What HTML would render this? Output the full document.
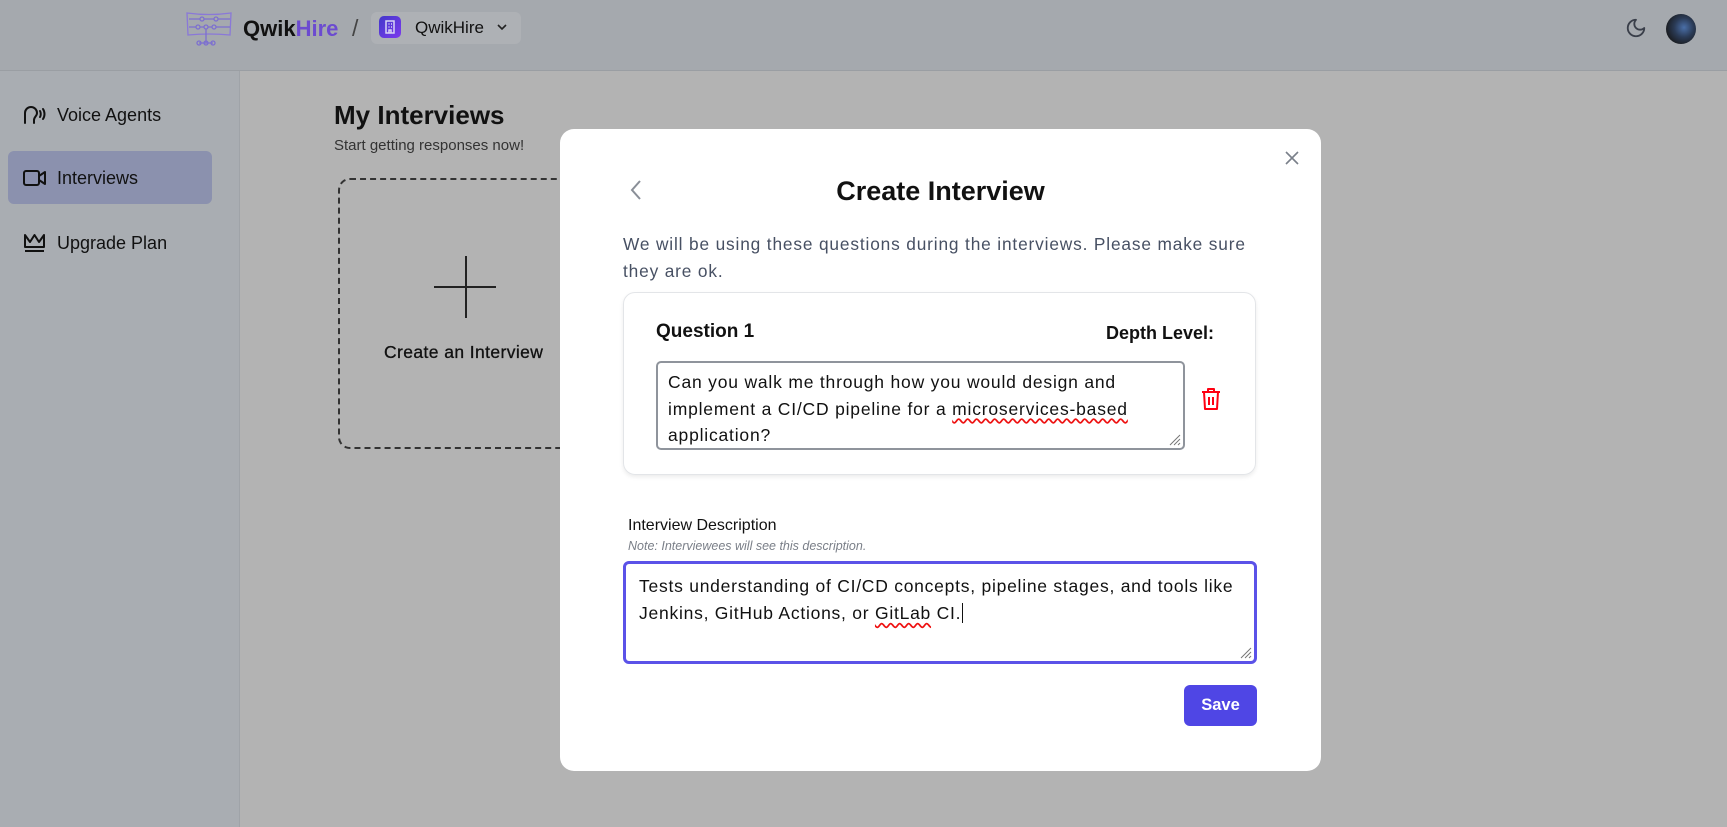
<!DOCTYPE html>
<html><head><meta charset="utf-8"><style>
*{box-sizing:border-box;margin:0;padding:0}
body{width:1727px;height:827px;overflow:hidden;font-family:"Liberation Sans",sans-serif;background:#b3b3b3;position:relative;color:#111}
.hdr{position:absolute;left:0;top:0;width:1727px;height:71px;background:#a5a9ae;border-bottom:1px solid #9a9ea3}
.side{position:absolute;left:0;top:71px;width:240px;height:756px;background:#a9adb2;border-right:1px solid #9fa3a8}
.abs{position:absolute}
.nav{position:absolute;left:22px;font-size:18px;color:#111;display:flex;align-items:center;gap:10px}
.modal{position:absolute;left:560px;top:129px;width:761px;height:642px;background:#fff;border-radius:14px}
.grip{position:absolute;right:2px;bottom:2px}
</style></head><body>
<div class="hdr">
 <svg class="abs" style="left:186px;top:11px" width="46" height="36" viewBox="0 0 46 36" fill="none" stroke="#7c6fd0" stroke-width="1.3">
  <path d="M1 2 Q23 5 45 2 L44 24 Q23 22 2 24 Z" stroke="#8a78d8"/>
  <path d="M3 8H14M18 8H28M32 8H44M3 16H10M14 16H18M22 16H26M30 16H44"/>
  <circle cx="16" cy="8" r="2"/><circle cx="30" cy="8" r="2"/><circle cx="12" cy="16" r="2"/><circle cx="20" cy="16" r="2"/><circle cx="28" cy="16" r="2"/>
  <path d="M20 18V32M13 32H27"/><circle cx="13" cy="32" r="2"/><circle cx="20" cy="32" r="2"/><circle cx="27" cy="32" r="2"/>
 </svg>
 <div class="abs" style="left:243px;top:16px;font-size:22px;font-weight:bold;color:#111">Qwik<span style="color:#6c4bd0">Hire</span></div>
 <div class="abs" style="left:352px;top:15px;font-size:23px;color:#444">/</div>
 <div class="abs" style="left:371px;top:12px;width:150px;height:32px;background:#aeb1b5;border-radius:6px"></div>
 <div class="abs" style="left:379px;top:16px;width:22px;height:22px;border-radius:5px;background:linear-gradient(135deg,#4338ca,#7c3aed)"></div>
 <svg class="abs" style="left:384px;top:20px" width="12" height="14" viewBox="0 0 12 14" fill="none" stroke="#d8d4f5" stroke-width="1.5"><rect x="2" y="1" width="8" height="12"/><path d="M4.5 4h1M7 4h1M4.5 7h1M7 7h1M5 13v-3h2v3"/></svg>
 <div class="abs" style="left:415px;top:18px;font-size:17px;color:#111">QwikHire</div>
 <svg class="abs" style="left:497px;top:24px" width="10" height="7" viewBox="0 0 10 7" fill="none" stroke="#222" stroke-width="1.6"><path d="M1 1l4 4 4-4"/></svg>
 <svg class="abs" style="left:1625px;top:17px" width="22" height="22" viewBox="0 0 24 24" fill="none" stroke="#3a3f4a" stroke-width="2" stroke-linecap="round" stroke-linejoin="round"><path d="M12 3a6 6 0 0 0 9 9 9 9 0 1 1-9-9Z"/></svg>
 <div class="abs" style="left:1666px;top:14px;width:30px;height:30px;border-radius:50%;background:radial-gradient(circle at 60% 45%,#4a6fa8 0,#2a3a55 40%,#1a1c20 75%)"></div>
</div>
<div class="side">
 <div class="nav" style="top:32px"><svg width="25" height="24" viewBox="0 0 25 24" fill="none" stroke="#111" stroke-width="2" stroke-linecap="round"><path d="M3 20V10a6 6 0 0 1 12 0c0 3-3 4-3 7v3"/><path d="M18 8c1 1.5 1 4.5 0 6M21 6c2 3 2 7 0 10"/></svg><span>Voice Agents</span></div>
 <div class="abs" style="left:8px;top:80px;width:204px;height:53px;background:#8b91ae;border-radius:6px"></div>
 <div class="nav" style="top:96px"><svg width="25" height="22" viewBox="0 0 25 22" fill="none" stroke="#111" stroke-width="2" stroke-linejoin="round"><rect x="2" y="4" width="15" height="14" rx="2"/><path d="M17 9l6-4v12l-6-4"/></svg><span>Interviews</span></div>
 <div class="nav" style="top:160px"><svg width="25" height="24" viewBox="0 0 25 24" fill="none" stroke="#111" stroke-width="2" stroke-linejoin="round"><path d="M3 4l5 7 4.5-7 4.5 7 5-7v12H3Z"/><path d="M3 20h19"/></svg><span>Upgrade Plan</span></div>
</div>
<div class="abs" style="left:334px;top:100px;font-size:26px;font-weight:bold;color:#111">My Interviews</div>
<div class="abs" style="left:334px;top:137px;font-size:15px;color:#333">Start getting responses now!</div>
<div class="abs" style="left:338px;top:178px;width:260px;height:271px;border:2px dashed #333;border-radius:12px"></div>
<div class="abs" style="left:465px;top:256px;width:2px;height:62px;background:#222"></div>
<div class="abs" style="left:434px;top:286px;width:62px;height:2px;background:#222"></div>
<div class="abs" style="left:384px;top:342px;font-size:17.5px;color:#111;-webkit-text-stroke:0.3px #111;letter-spacing:0.4px">Create an Interview</div>

<div class="modal">
 <svg class="abs" style="left:724px;top:21px" width="16" height="16" viewBox="0 0 16 16" stroke="#7a808a" stroke-width="1.6"><path d="M2 2l12 12M14 2L2 14"/></svg>
 <svg class="abs" style="left:70px;top:50px" width="12" height="22" viewBox="0 0 12 22" fill="none" stroke="#8a8f98" stroke-width="2"><path d="M10 2L2 11l8 9"/></svg>
 <div class="abs" style="left:0;width:761px;top:47px;text-align:center;font-size:27px;font-weight:bold;color:#111">Create Interview</div>
 <div class="abs" style="left:63px;top:102px;width:690px;font-size:17.3px;line-height:27px;color:#475063;letter-spacing:0.85px;white-space:nowrap">We will be using these questions during the interviews. Please make sure<br>they are ok.</div>
 <div class="abs" style="left:63px;top:163px;width:633px;height:183px;border:1px solid #e3e5e8;border-radius:12px;box-shadow:0 2px 4px rgba(0,0,0,.08)"></div>
 <div class="abs" style="left:96px;top:192px;font-size:19px;font-weight:bold;color:#111">Question 1</div>
 <div class="abs" style="left:546px;top:194px;font-size:18px;font-weight:bold;color:#111">Depth Level:</div>
 <div class="abs" style="left:96px;top:232px;width:529px;height:89px;border:2px solid #8f949c;border-radius:5px;padding:6px 10px;font-size:17.5px;line-height:26.5px;color:#111;letter-spacing:0.8px;white-space:nowrap;overflow:hidden">Can you walk me through how you would design and<br>implement a CI/CD pipeline for a <span style="text-decoration:underline wavy #e11;text-underline-offset:3px">microservices-based</span><br>application?
  <svg class="grip" width="14" height="14" viewBox="0 0 14 14" stroke="#777" stroke-width="1"><path d="M13 3L3 13M13 7L7 13M13 11L11 13"/></svg></div>
 <svg class="abs" style="left:641px;top:258px" width="20" height="24" viewBox="0 0 20 24" fill="none" stroke="#f01" stroke-width="2" stroke-linejoin="round"><path d="M1 5h18M7 5V2h6v3M3 5l1 17h12l1-17M8 10v8M12 10v8"/></svg>
 <div class="abs" style="left:68px;top:388px;font-size:16px;color:#111">Interview Description</div>
 <div class="abs" style="left:68px;top:410px;font-size:12.5px;font-style:italic;color:#7a7f88">Note: Interviewees will see this description.</div>
 <div class="abs" style="left:63px;top:432px;width:634px;height:103px;border:3px solid #5b52e8;border-radius:6px;padding:9px 13px;font-size:17.5px;line-height:27px;color:#111;letter-spacing:0.75px;white-space:nowrap;overflow:hidden">Tests understanding of CI/CD concepts, pipeline stages, and tools like<br>Jenkins, GitHub Actions, or <span style="text-decoration:underline wavy #e11;text-underline-offset:3px">GitLab</span> CI.<span style="border-left:1px solid #111;margin-left:1px"></span>
  <svg class="grip" width="14" height="14" viewBox="0 0 14 14" stroke="#777" stroke-width="1"><path d="M13 3L3 13M13 7L7 13M13 11L11 13"/></svg></div>
 <div class="abs" style="left:624px;top:556px;width:73px;height:41px;background:#4f46e5;border-radius:6px;color:#fff;font-size:16.5px;font-weight:bold;text-align:center;line-height:41px">Save</div>
</div>
</body></html>
